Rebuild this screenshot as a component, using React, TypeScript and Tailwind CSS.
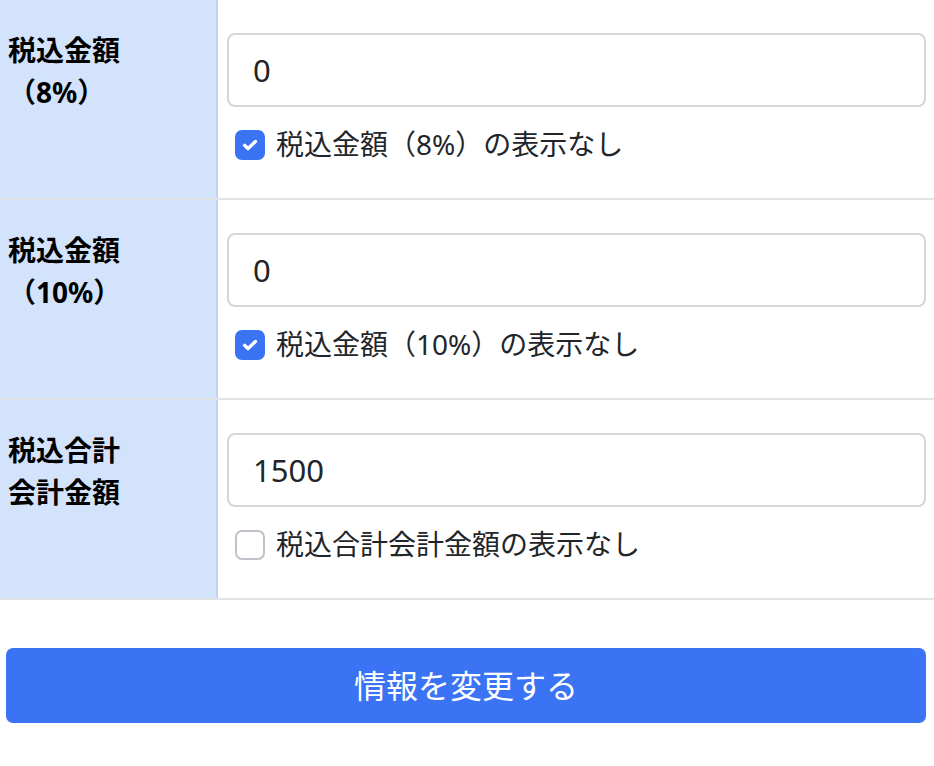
import { useState } from "react";

type Row = {
    id: number;
    label: string[];
    value: string;
    checkLabel: string;
    checked: boolean;
};

// 税込金額の行データ
const initialRows: Row[] = [
    { id: 1, label: ["税込金額", "（8%）"], value: "0", checkLabel: "税込金額（8%）の表示なし", checked: true },
    { id: 2, label: ["税込金額", "（10%）"], value: "0", checkLabel: "税込金額（10%）の表示なし", checked: true },
    { id: 3, label: ["税込合計", "会計金額"], value: "1500", checkLabel: "税込合計会計金額の表示なし", checked: false },
];

const font = { fontFamily: '"Noto Sans", "Noto Sans CJK JP", sans-serif' };

const CheckBox = ({ checked, onChange }: { checked: boolean; onChange: () => void }) => (
    <span
        onClick={onChange}
        className={
            checked
                ? "flex h-[30px] w-[30px] shrink-0 items-center justify-center rounded-[7px] bg-[#3b73f5]"
                : "flex h-[30px] w-[30px] shrink-0 items-center justify-center rounded-[7px] border-2 border-[#bfc3c9] bg-white"
        }
    >
        {checked && (
            <svg width="18" height="18" viewBox="0 0 16 16" fill="none">
                <path d="M3.2 8.3l3 2.9L12.8 4.9" stroke="white" strokeWidth="3" strokeLinecap="round" strokeLinejoin="round" />
            </svg>
        )}
    </span>
);

const App = () => {
    const [rows, setRows] = useState(initialRows);

    const toggle = (id: number) => {
        setRows(rows.map((r) => (r.id === id ? { ...r, checked: !r.checked } : r)));
    };

    const update = (id: number, value: string) => {
        setRows(rows.map((r) => (r.id === id ? { ...r, value } : r)));
    };

    return (
        <div className="min-h-screen w-[934px] bg-white text-[#212529]" style={font}>
            {/* 金額テーブル */}
            <div>
                {rows.map((row) => (
                    <div key={row.id} className="flex border-b-2 border-[#e0e3e8]">
                        <div className="w-[218px] shrink-0 border-r-2 border-[#c3d2ec] bg-[#d3e3fc] pl-[8px] pt-[29px] text-[28px] font-bold leading-[42px] text-black">
                            {row.label[0]}
                            <br />
                            {row.label[1]}
                        </div>
                        <div className="flex-1 pl-[9px] pr-[8px] pt-[33px] pb-[32px]">
                            <input
                                type="text"
                                value={row.value}
                                onChange={(e) => update(row.id, e.target.value)}
                                className="h-[74px] w-full rounded-[8px] border-2 border-[#d3d6db] bg-white pl-[24px] text-[31px] text-[#212529] outline-none"
                                style={font}
                            />
                            <label className="mt-[17px] flex h-[42px] items-center gap-[11px] pl-[8px] text-[28px] leading-[42px]">
                                <CheckBox checked={row.checked} onChange={() => toggle(row.id)} />
                                <span className="-mt-[3px]">{row.checkLabel}</span>
                            </label>
                        </div>
                    </div>
                ))}
            </div>

            {/* 送信ボタン */}
            <div className="pl-[6px] pr-[8px] pt-[48px]">
                <button className="flex h-[75px] w-full items-center justify-center rounded-[7px] bg-[#3b73f5] text-[32px] text-white">
                    情報を変更する
                </button>
            </div>
        </div>
    );
};

export default App;
